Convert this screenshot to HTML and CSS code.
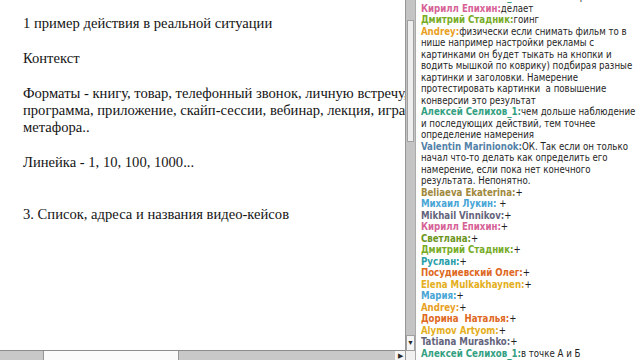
FILE: index.html
```html
<!DOCTYPE html>
<html lang="ru">
<head>
    <meta charset="UTF-8">
    <meta name="viewport" content="width=device-width, initial-scale=1.0">
    <title>вебинар</title>
    <link rel="stylesheet" href="styles.css">
</head>
<body>
    <div class="screen">
        <div class="doc">
            <div class="page">
                <p>1 пример действия в реальной ситуации</p>
                <p>&nbsp;</p>
                <p>Контекст</p>
                <p>&nbsp;</p>
                <p>Форматы - книгу, товар, телефонный звонок, личную встречу,<br>программа, приложение, скайп-сессии, вебинар, лекция, игра,<br>метафора..</p>
                <p>&nbsp;</p>
                <p>Линейка - 1, 10, 100, 1000...</p>
                <p>&nbsp;</p>
                <p>&nbsp;</p>
                <p>3. Список, адреса и названия видео-кейсов</p>
            </div>
            <div class="hbar">
                <div class="hbar-track">
                    <div class="hbar-thumb"></div>
                </div>
                <div class="arrow-btn">&#9654;</div>
            </div>
        </div>

        <div class="vbar">
            <div class="vbar-track">
                <div class="vbar-thumb"></div>
            </div>
            <div class="arrow-btn down">&#9660;</div>
            <div class="corner"></div>
        </div>

        <div class="chat">
            <div class="messages">
                <div class="msg"><b class="c-teal">Алексей Селихов_1:</b>то есть намерение это то что он хочет</div>
                <div class="msg"><b class="c-pink">Кирилл Епихин:</b>делает</div>
                <div class="msg"><b class="c-green">Дмитрий Стадник:</b>гоинг</div>
                <div class="msg"><b class="c-orange">Andrey:</b>физически если снимать фильм то в<br>нише например настройки рекламы с<br>картинками он будет тыкать на кнопки и<br>водить мышкой по коврику) подбирая разные<br>картинки и заголовки. Намерение<br>протестировать картинки&nbsp; а повышение<br>конверсии это результат</div>
                <div class="msg"><b class="c-teal">Алексей Селихов_1:</b>чем дольше наблюдение<br>и последующих действий, тем точнее<br>определение намерения</div>
                <div class="msg"><b class="c-steel">Valentin Marinionok:</b>ОК. Так если он только<br>начал что-то делать как определить его<br>намерение, если пока нет конечного<br>результата. Непонятно.</div>
                <div class="msg"><b class="c-khaki">Beliaeva Ekaterina:</b>+</div>
                <div class="msg"><b class="c-sky">Михаил Лукин:</b> +</div>
                <div class="msg"><b class="c-slate">Mikhail Vinnikov:</b>+</div>
                <div class="msg"><b class="c-pink">Кирилл Епихин:</b>+</div>
                <div class="msg"><b class="c-olive">Светлана:</b>+</div>
                <div class="msg"><b class="c-green">Дмитрий Стадник:</b>+</div>
                <div class="msg"><b class="c-cyan">Руслан:</b>+</div>
                <div class="msg"><b class="c-red">Посудиевский Олег:</b>+</div>
                <div class="msg"><b class="c-yellow">Elena Mulkakhaynen:</b>+</div>
                <div class="msg"><b class="c-sky">Мария:</b>+</div>
                <div class="msg"><b class="c-orange">Andrey:</b>+</div>
                <div class="msg"><b class="c-red">Дорина&nbsp; Наталья:</b>+</div>
                <div class="msg"><b class="c-yellow">Alymov Artyom:</b>+</div>
                <div class="msg"><b class="c-slate">Tatiana Murashko:</b>+</div>
                <div class="msg"><b class="c-teal">Алексей Селихов_1:</b>в точке А и Б</div>
            </div>
            <div class="cbar">
                <div class="cbar-track"></div>
                <div class="arrow-btn down">&#9660;</div>
            </div>
        </div>
    </div>
</body>
</html>
```

FILE: styles.css
```css
body{
    margin: 0;
    background-color: white;
}

.screen{
    display: flex;
    width: 640px;
    height: 360px;
    overflow: hidden;
}

/* документ слева */
.doc{
    display: flex;
    flex-direction: column;
    width: 405px;
}

.page{
    flex: 1;
    overflow: hidden;
    padding: 15px 0 0 23px;
    font-family: "Liberation Serif", "Times New Roman", serif;
    font-size: 14.6px;
    line-height: 17.4px;
    color: rgb(20, 20, 20);
    white-space: nowrap;
}

.page p{
    margin: 0;
}

.hbar{
    display: flex;
    height: 9px;
    border-top: 1px solid rgb(140, 140, 140);
    background-color: rgb(200, 200, 200);
}

.hbar-track{
    flex: 1;
    padding-left: 43px;
}

.hbar-thumb{
    width: 134px;
    height: 100%;
    background-color: rgb(250, 250, 250);
    border-left: 1px solid rgb(150, 150, 150);
    border-right: 1px solid rgb(150, 150, 150);
}

.arrow-btn{
    display: flex;
    align-items: center;
    justify-content: center;
    width: 10px;
    font-size: 7px;
    color: rgb(40, 40, 40);
    background-color: rgb(245, 245, 245);
}

/* вертикальная полоса документа */
.vbar{
    display: flex;
    flex-direction: column;
    width: 13px;
    border-left: 1px solid rgb(150, 150, 150);
}

.vbar-track{
    flex: 1;
    padding-top: 20px;
    background-color: rgb(196, 196, 196);
}

.vbar-thumb{
    height: 120px;
    margin: 0 1px;
    background-color: rgb(238, 238, 238);
    border: 1px solid rgb(160, 160, 160);
}

.vbar .arrow-btn{
    width: auto;
    height: 14px;
    border: 1px solid rgb(160, 160, 160);
}

.corner{
    height: 9px;
    background-color: rgb(240, 240, 240);
}

/* чат справа */
.chat{
    flex: 1;
    display: flex;
    border-left: 1px solid rgb(170, 170, 170);
}

.messages{
    flex: 1;
    display: flex;
    flex-direction: column;
    justify-content: flex-end;
    overflow: hidden;
    padding: 0 0 1px 5px;
    font-family: "DejaVu Sans Condensed", "DejaVu Sans", sans-serif;
    font-size: 9.6px;
    line-height: 11.5px;
    color: rgb(30, 30, 30);
    white-space: nowrap;
}

.msg b{
    font-weight: bold;
}

.cbar{
    display: flex;
    flex-direction: column;
    width: 9px;
    border-left: 1px solid rgb(150, 150, 150);
}

.cbar-track{
    flex: 1;
    background-color: rgb(225, 225, 225);
}

.cbar .arrow-btn{
    width: auto;
    height: 13px;
}

.c-pink{ color: rgb(214, 98, 150); }
.c-green{ color: rgb(120, 172, 40); }
.c-orange{ color: rgb(232, 160, 30); }
.c-teal{ color: rgb(52, 160, 130); }
.c-steel{ color: rgb(84, 130, 168); }
.c-khaki{ color: rgb(160, 136, 60); }
.c-sky{ color: rgb(72, 166, 214); }
.c-slate{ color: rgb(100, 100, 124); }
.c-olive{ color: rgb(108, 150, 30); }
.c-cyan{ color: rgb(40, 158, 170); }
.c-red{ color: rgb(222, 104, 34); }
.c-yellow{ color: rgb(228, 174, 32); }
```
